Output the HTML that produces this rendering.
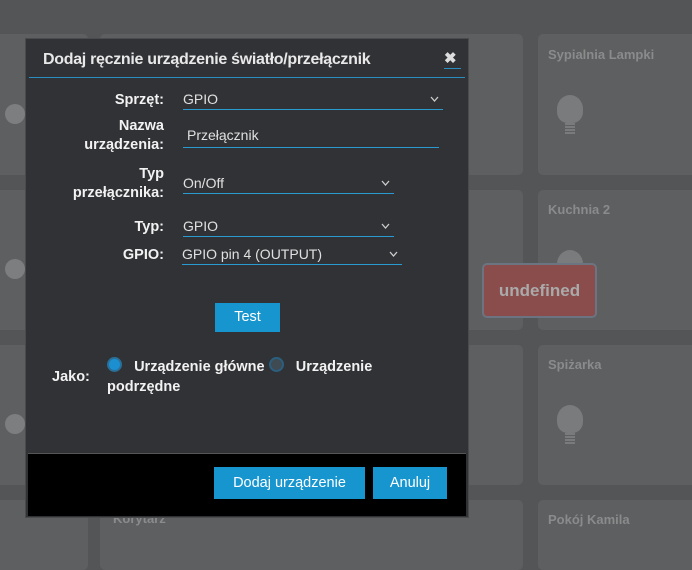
<!DOCTYPE html>
<html><head><meta charset="utf-8"><style>
body{margin:0;width:692px;height:557px;overflow:hidden;background:#545556;font-family:"Liberation Sans",sans-serif;position:relative}
.card{position:absolute;background:#5e5f60;border-radius:5px}
.ct{position:absolute;color:#8a8b8c;font-size:13px;font-weight:bold}
.bulb{position:absolute;width:26px;height:28px;background:#7a7b7c;border-radius:50% 50% 40% 40%}
.bulb:after{content:"";position:absolute;left:8px;top:28px;width:10px;height:11px;background:repeating-linear-gradient(#7a7b7c 0 2px,#5e5f60 2px 3px)}
.modal{position:absolute;left:25px;top:38px;width:444px;height:480px;background:#303235;border:1px solid #4a4b4d;box-sizing:border-box}
.title{position:absolute;left:17px;top:12px;color:#e8e8e8;font-size:16px;font-weight:bold;letter-spacing:-0.3px}
.tl{position:absolute;left:3px;right:3px;top:38px;height:1px;background:#2a8fc0}
.x{position:absolute;left:418px;top:10px;color:#ddd;font-size:15px;font-weight:bold}
.xl{position:absolute;left:418px;top:29px;width:17px;height:1px;background:#2a8fc0}
.lab{position:absolute;color:#f2f2f2;font-size:14.5px;font-weight:bold;text-align:right;width:138px;left:0;line-height:19px}
.f{position:absolute;color:#e0e0e0;font-size:14px;border-bottom:1px solid #2a9bd0;height:19px;box-sizing:border-box}
.f svg{position:absolute;right:4px;top:5px}
.btn{position:absolute;background:#1795cf;color:#fff;font-size:14.5px;text-align:center}
.radio{display:inline-block;vertical-align:-1px;width:11px;height:11px;border-radius:50%}
</style></head><body>
<div class="card" style="left:-10px;top:34px;width:98px;height:141px"></div>
<div class="card" style="left:-10px;top:190px;width:98px;height:140px"></div>
<div class="card" style="left:-10px;top:345px;width:98px;height:140px"></div>
<div class="card" style="left:-10px;top:500px;width:98px;height:70px"></div>
<div class="card" style="left:100px;top:34px;width:423px;height:141px"></div>
<div class="card" style="left:100px;top:190px;width:423px;height:140px"></div>
<div class="card" style="left:100px;top:345px;width:423px;height:140px"></div>
<div class="card" style="left:100px;top:500px;width:423px;height:70px"></div>
<div class="ct" style="left:113px;top:511px">Korytarz</div>
<div class="card" style="left:538px;top:34px;width:170px;height:141px"></div>
<div class="card" style="left:538px;top:190px;width:170px;height:140px"></div>
<div class="card" style="left:538px;top:345px;width:170px;height:140px"></div>
<div class="card" style="left:538px;top:500px;width:170px;height:70px"></div>
<div class="ct" style="left:548px;top:47px">Sypialnia Lampki</div>
<div class="ct" style="left:548px;top:202px">Kuchnia 2</div>
<div class="ct" style="left:548px;top:357px">Spiżarka</div>
<div class="ct" style="left:548px;top:512px">Pokój Kamila</div>
<div class="bulb" style="left:557px;top:95px"></div>
<div class="bulb" style="left:557px;top:405px"></div>
<div class="bulb" style="left:557px;top:250px"></div>
<div style="position:absolute;left:482px;top:263px;width:115px;height:55px;background:#8a4d4b;border:2px solid #6b7480;border-radius:5px;box-sizing:border-box;color:#aaa;font-weight:bold;font-size:17px;text-align:center;line-height:52px">undefined</div>
<div style="position:absolute;left:5px;top:104px;width:20px;height:20px;border-radius:50%;background:#7d7e7f"></div>
<div style="position:absolute;left:5px;top:259px;width:20px;height:20px;border-radius:50%;background:#7d7e7f"></div>
<div style="position:absolute;left:5px;top:414px;width:20px;height:20px;border-radius:50%;background:#7d7e7f"></div>

<div class="modal">
<div class="title">Dodaj ręcznie urządzenie światło/przełącznik</div>
<div class="x">✖</div><div class="xl"></div>
<div class="tl"></div>
<div class="lab" style="top:52px">Sprzęt:</div>
<div class="f" style="left:157px;top:52px;width:260px">GPIO<svg width="9" height="6"><path d="M1 1L4.5 5L8 1" stroke="#ccc" stroke-width="1.3" fill="none"/></svg></div>
<div class="lab" style="top:78px">Nazwa<br>urządzenia:</div>
<div class="f" style="left:157px;top:88px;width:256px;padding-left:4px;height:21px">Przełącznik</div>
<div class="lab" style="top:126px">Typ<br>przełącznika:</div>
<div class="f" style="left:157px;top:136px;width:211px">On/Off<svg width="9" height="6"><path d="M1 1L4.5 5L8 1" stroke="#ccc" stroke-width="1.3" fill="none"/></svg></div>
<div class="lab" style="top:179px">Typ:</div>
<div class="f" style="left:157px;top:179px;width:211px">GPIO<svg width="9" height="6"><path d="M1 1L4.5 5L8 1" stroke="#ccc" stroke-width="1.3" fill="none"/></svg></div>
<div class="lab" style="top:207px">GPIO:</div>
<div class="f" style="left:156px;top:207px;width:220px">GPIO pin 4 (OUTPUT)<svg width="9" height="6"><path d="M1 1L4.5 5L8 1" stroke="#ccc" stroke-width="1.3" fill="none"/></svg></div>
<div class="btn" style="left:189px;top:264px;width:65px;height:29px;line-height:29px">Test</div>
<div style="position:absolute;left:26px;top:330px;color:#f2f2f2;font-size:14.5px;font-weight:bold">Jako:</div>
<div style="position:absolute;left:81px;top:318px;width:300px;color:#f2f2f2;font-size:14.5px;font-weight:bold;line-height:20px"><span class="radio" style="background:#1b8fd0;border:2px solid #2a6f98"></span>&nbsp;&nbsp;&nbsp;Urządzenie główne <span class="radio" style="background:#3f4a52;border:2px solid #2a5f7f"></span>&nbsp;&nbsp;&nbsp;Urządzenie podrzędne</div>
<div style="position:absolute;left:2px;right:2px;top:414px;height:62px;background:#000;border-top:1px solid #555"></div>
<div class="btn" style="left:188px;top:428px;width:151px;height:32px;line-height:32px">Dodaj urządzenie</div>
<div class="btn" style="left:347px;top:428px;width:74px;height:32px;line-height:32px">Anuluj</div>
</div>
</body></html>
